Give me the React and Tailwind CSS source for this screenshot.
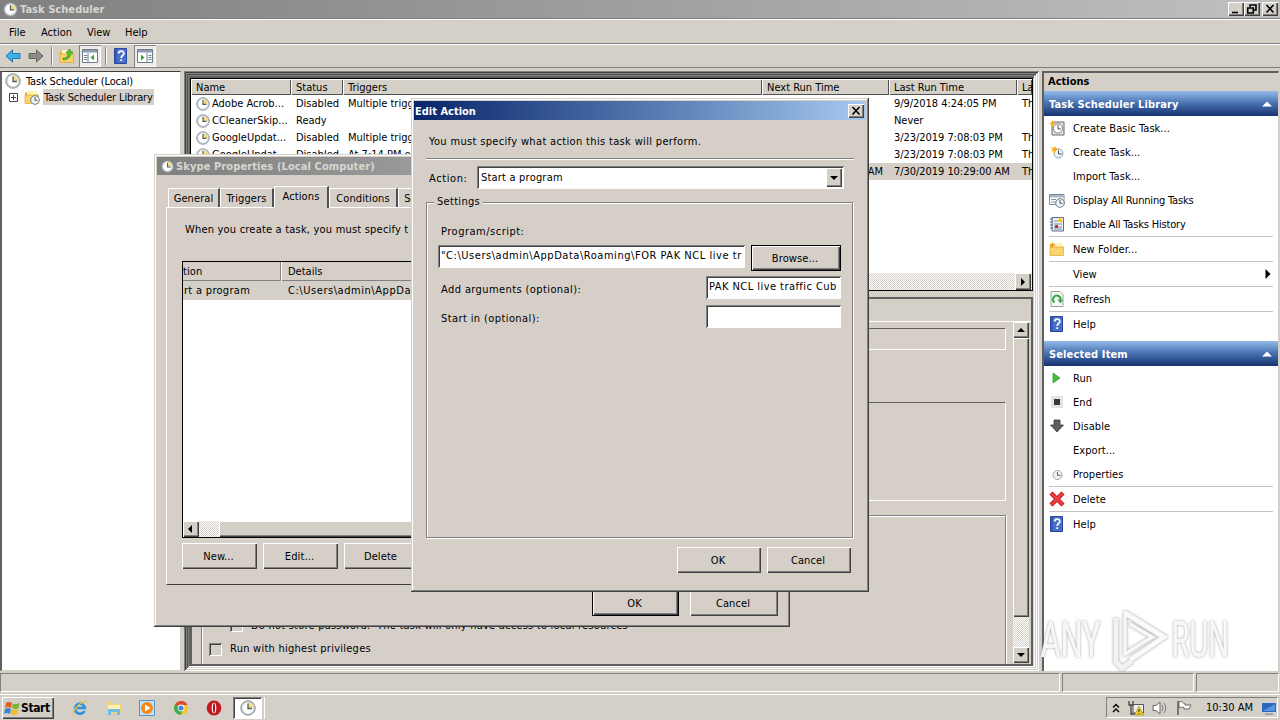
import clsx from "clsx";

const raised = "bg-[#d4d0c8] shadow-[inset_1px_1px_#fff,inset_-1px_-1px_#404040,inset_-2px_-2px_#808080]";
const sunken = "shadow-[inset_1px_1px_#808080,inset_-1px_-1px_#fff,inset_2px_2px_#404040]";
const dither = "bg-[repeating-conic-gradient(#fff_0_25%,#d4d0c8_0_50%)] bg-[length:2px_2px]";
// nested client edges around the middle pane
const frame =
    "shadow-[inset_1px_1px_#808080,inset_-1px_-1px_#fff,inset_2px_2px_#404040,inset_-2px_-2px_#d4d0c8,inset_3px_3px_#808080,inset_-3px_-3px_#fff,inset_4px_4px_#505050,inset_-4px_-4px_#d4d0c8,inset_5px_5px_#808080,inset_-5px_-5px_#fff,inset_7px_7px_#606060,inset_-7px_-7px_#d4d0c8]";

const tasks = [
    { name: "Adobe Acrob...", status: "Disabled", trigger: "Multiple trigge", last: "9/9/2018 4:24:05 PM", result: "Th" },
    { name: "CCleanerSkip...", status: "Ready", trigger: "", last: "Never", result: "" },
    { name: "GoogleUpdat...", status: "Disabled", trigger: "Multiple trigge", last: "3/23/2019 7:08:03 PM", result: "Th" },
    { name: "GoogleUpdat...", status: "Disabled", trigger: "At 7:14 PM e", last: "3/23/2019 7:08:03 PM", result: "Th" },
    { next: "AM", last: "7/30/2019 10:29:00 AM", result: "Th", selected: true },
];

const libraryActions = [
    { label: "Create Basic Task...", icon: "basic" },
    { label: "Create Task...", icon: "create" },
    { label: "Import Task..." },
    { label: "Display All Running Tasks", icon: "running", tight: true },
    { label: "Enable All Tasks History", icon: "history", line: true, tight: true },
    { label: "New Folder...", icon: "folder", line: true },
    { label: "View", arrow: true, line: true },
    { label: "Refresh", icon: "refresh", line: true },
    { label: "Help", icon: "help" },
];

const itemActions = [
    { label: "Run", icon: "run" },
    { label: "End", icon: "end" },
    { label: "Disable", icon: "disable" },
    { label: "Export..." },
    { label: "Properties", icon: "clock" },
    { label: "Delete", icon: "delete", line: true, above: true },
    { label: "Help", icon: "help" },
];

function Clock({ size = 16 }) {
    return (
        <svg width={size} height={size} viewBox="0 0 16 16" className="shrink-0">
            <circle cx="8" cy="8" r="7.2" fill="#c9d0d6" stroke="#8b9298" />
            <circle cx="8" cy="8" r="5.4" fill="#fff" />
            <path d="M8 8V2.6A5.4 5.4 0 0 1 13.4 8Z" fill="#f3dd82" />
            <path d="M8 3.5V8.5H12" fill="none" stroke="#4e5964" strokeWidth="1.3" />
        </svg>
    );
}

function Folder() {
    return (
        <>
            <path d="M1 3.5H6L7.5 5H14V14H1Z" fill="#e9ae2c" />
            <path d="M3 2H13V6H3Z" fill="#fff3bd" />
            <path d="M1 6H14.5V14.5H1Z" fill="#f9d468" stroke="#d89b20" strokeWidth=".6" />
        </>
    );
}

function SmallClock() {
    return (
        <>
            <circle cx="11" cy="11" r="4.3" fill="#eef4f7" stroke="#6d7d88" />
            <path d="M11 8V11.3H13.5" fill="none" stroke="#4d5a64" />
        </>
    );
}

const drawings = {
    basic: (
        <>
            <path d="M3 2H15V15H3Z" fill="#e5e3df" stroke="#6d6a66" />
            <circle cx="9" cy="8.5" r="4.6" fill="#fff" stroke="#7c858b" />
            <path d="M9 5V9H12" fill="none" stroke="#4d5a64" />
            <path d="M3.5 0L4.5 2.5L7 3.5L4.5 4.5L3.5 7L2.5 4.5L0 3.5L2.5 2.5Z" fill="#f7a922" />
        </>
    ),
    create: (
        <>
            <circle cx="9.5" cy="9.5" r="4.5" fill="#e8f2f8" stroke="#8da6b5" />
            <path d="M9.5 6.5V10H12.5" fill="none" stroke="#43525d" />
            <path d="M2 3L5 4L6 2L7.5 4.5L10 5.5L7 6.5L5.5 10L4.5 7L2 7.5L3.5 5.5Z" fill="#f9ac1c" />
        </>
    ),
    running: (
        <>
            <path d="M.5 2.5H15V12.5H.5Z" fill="#fff" stroke="#7d8b98" />
            <path d="M1 3H14.5V5.5H1Z" fill="#a9b7c4" />
            <path d="M2 7.5H7M2 10H7" stroke="#7d95ab" />
            <SmallClock />
        </>
    ),
    history: (
        <>
            <path d="M3 1.5H14.5V15H3Z" fill="#eaf0f7" stroke="#5c6f86" />
            <path d="M5 5H13M5 8H13M5 11H13M5 13H13" stroke="#7793b4" />
            <path d="M1 3H4M1 6H4M1 9H4M1 12H4" stroke="#5a6069" />
            <path d="M11 1L14 6H8Z" fill="#f5c625" />
            <path d="M6 9H9V12H6Z" fill="#c23131" />
        </>
    ),
    folder: (
        <>
            <Folder />
            <path d="M3.5 1L4.5 3L7 4L4.5 5L3.5 7L2.5 5L0 4L2.5 3Z" fill="#f5971a" />
        </>
    ),
    refresh: (
        <>
            <path d="M2 .5H11L14 3.5V15.5H2Z" fill="#f4f8f4" stroke="#93a796" />
            <path d="M5.5 11.5A3.8 3.8 0 1 1 11.5 9" fill="none" stroke="#35a847" strokeWidth="2" />
            <path d="M8.5 8.5H14L11.5 12.5Z" fill="#35a847" />
        </>
    ),
    help: (
        <>
            <path d="M1.5 .5H13.5V15.5H1.5Z" fill="#4a6fc9" stroke="#2a479f" />
            <path d="M3 1V15" stroke="#2a479f" />
            <path d="M5.6 5.6C5.6 2.3 10.8 2.3 10.8 5.4C10.8 7.3 8.2 7.5 8.2 10" fill="none" stroke="#fff" strokeWidth="1.7" />
            <path d="M7.3 11.3H9.1V13H7.3Z" fill="#fff" />
        </>
    ),
    run: <path d="M4 3L11 8L4 13Z" fill="#43bd32" stroke="#2d9225" strokeWidth=".7" />,
    end: (
        <>
            <path d="M2 2H14V14H2Z" fill="#e3e3e3" />
            <path d="M5 5H11V11H5Z" fill="#383838" />
        </>
    ),
    disable: <path d="M5 2H11V7H14.5L8 14L1.5 7H5Z" fill="#5e5e5e" stroke="#3e3e3e" strokeWidth=".8" />,
    clock: (
        <>
            <circle cx="8.5" cy="9" r="4.5" fill="#f1f1ef" stroke="#a1a7a9" />
            <path d="M8.5 6V9.3H11.5" fill="none" stroke="#665f4b" />
        </>
    ),
    delete: (
        <>
            <path d="M2 2L14 14M14 2L2 14" stroke="#b3161c" strokeWidth="4.4" />
            <path d="M2 2L14 14M14 2L2 14" stroke="#ed3d40" strokeWidth="2.6" />
        </>
    ),
    library: (
        <>
            <Folder />
            <SmallClock />
        </>
    ),
    up: (
        <>
            <Folder />
            <path d="M4 10C8 10 9 8 9 5H7L10.5 1L14 5H12C12 9 9 12 4 12Z" fill="#5abb37" stroke="#338b20" strokeWidth=".6" />
        </>
    ),
    back: <path d="M1 8L7.5 2V5.5H15V10.5H7.5V14Z" fill="#3fb1ea" stroke="#2176ae" />,
    forward: <path d="M15 8L8.5 2V5.5H1V10.5H8.5V14Z" fill="#8b8b8b" stroke="#626262" />,
    paneLeft: (
        <>
            <path d="M.5 1.5H15.5V14.5H.5Z" fill="#fff" stroke="#6e7b8b" />
            <path d="M1 2H15V4.5H1Z" fill="#8b9bb0" />
            <path d="M6 5V14M2 7.5H5M2 9.5H5M2 11.5H5" stroke="#6e7b8b" />
            <path d="M12 6.5V12.5L8.5 9.5Z" fill="#37a52d" />
        </>
    ),
    paneRight: (
        <>
            <path d="M.5 1.5H15.5V14.5H.5Z" fill="#fff" stroke="#6e7b8b" />
            <path d="M1 2H15V4.5H1Z" fill="#8b9bb0" />
            <path d="M10 5V14M11.5 7.5H14.5M11.5 9.5H14.5M11.5 11.5H14.5" stroke="#6e7b8b" />
            <path d="M4 6.5V12.5L7.5 9.5Z" fill="#37a52d" />
        </>
    ),
    ie: (
        <>
            <path d="M12.5 11A5 5 0 1 1 13 8H5" fill="none" stroke="#2e94d9" strokeWidth="2.6" />
            <path d="M2 14.5C-2 12 11 -1 15 2" fill="none" stroke="#efbd35" strokeWidth="1.3" />
        </>
    ),
    explorer: (
        <>
            <path d="M1 2H6L7 4H15V13H1Z" fill="#f3d573" />
            <path d="M2 5H14V10H2Z" fill="#fdf2b4" />
            <path d="M2 9H14V15H11V12H5V15H2Z" fill="#72bde2" />
        </>
    ),
    media: (
        <>
            <path d="M.5 .5H15.5V15.5H.5Z" fill="#c7e1f5" stroke="#5396cd" />
            <circle cx="8" cy="8" r="6" fill="#f18a1d" />
            <path d="M6 4.5L11.5 8L6 11.5Z" fill="#fff" />
        </>
    ),
    chrome: (
        <>
            <circle cx="8" cy="8" r="7" fill="#f4c829" />
            <path d="M8 8L2 4.5A7 7 0 0 1 14.5 5H8Z" fill="#df4634" />
            <path d="M8 8L2 4.5A7 7 0 0 0 7.5 15L10.5 9Z" fill="#3fa954" />
            <circle cx="8" cy="8" r="3.4" fill="#fff" />
            <circle cx="8" cy="8" r="2.6" fill="#4b86e2" />
        </>
    ),
    opera: (
        <>
            <ellipse cx="8" cy="8" rx="7.3" ry="7.5" fill="#c4161c" />
            <ellipse cx="8" cy="8" rx="2.3" ry="5.3" fill="#fff" />
            <ellipse cx="8" cy="8" rx="1.1" ry="4.8" fill="#a31216" />
        </>
    ),
    flag: (
        <>
            <path d="M2 1V15" stroke="#555" strokeWidth="1.4" />
            <path d="M3 2C6 0 7 4 9 3.5L9 5H15L13 9H8V7.5C6 7 5 7 3 8Z" fill="#fff" stroke="#666" />
        </>
    ),
    sound: (
        <>
            <path d="M1 5.5H4L8 2V14L4 10.5H1Z" fill="#fff" stroke="#666" />
            <path d="M10 5Q12 8 10 11M12 3Q15.5 8 12 13" fill="none" stroke="#777" />
        </>
    ),
    network: (
        <>
            <path d="M5 4.5H15.5V13H5Z" fill="#eee" stroke="#555" />
            <path d="M1 1V5H5V1M3 5V14H7" fill="none" stroke="#444" strokeWidth="1.3" />
            <path d="M11 6L15.5 15H6.5Z" fill="#f5d128" stroke="#9e8413" strokeWidth=".6" />
            <path d="M11 9V12M11 13V14" stroke="#222" />
        </>
    ),
    desktop: (
        <>
            <path d="M.5 2.5H15.5V12.5H.5Z" fill="#2c67bd" stroke="#cfd8e2" />
            <path d="M2 11L14 4V11Z" fill="#5997df" />
            <path d="M4 14H12" stroke="#777" />
        </>
    ),
    windows: (
        <>
            <path d="M2 3Q5 1 8 3L7 8Q4 6 1 8Z" fill="#e95d25" />
            <path d="M9 3.5Q12 5 15.5 3L14.5 8Q11 10 8 8Z" fill="#76b52c" />
            <path d="M1 9Q4 7 7 9L6 14Q3 12 0 14Z" fill="#3c86cf" />
            <path d="M8 9Q11 11 14 9L13 14Q10 16 7 14Z" fill="#f3bc22" />
        </>
    ),
};

function Icon({ name, size = 16 }) {
    return (
        <svg width={size} height={size} viewBox="0 0 16 16" className="shrink-0">
            {drawings[name]}
        </svg>
    );
}

function Arrow({ dir, size = 8 }) {
    const d = { left: "M5 0V8L1 4Z", right: "M2 0V8L6 4Z", down: "M0 2H8L4 6Z", up: "M0 6H8L4 2Z" }[dir];
    return (
        <svg width={size} height={size} viewBox="0 0 8 8">
            <path d={d} fill="currentColor" />
        </svg>
    );
}

function ScrollButton({ dir, className = "h-4 w-4" }) {
    return (
        <div className={clsx("flex shrink-0 items-center justify-center", raised, className)}>
            <Arrow dir={dir} />
        </div>
    );
}

function Button({ children, primary, className }) {
    return (
        <button
            className={clsx(
                "flex shrink-0 items-center justify-center pt-px pr-[2px] tracking-[0.1px]",
                primary
                    ? "bg-[#d5cfc8] shadow-[inset_0_0_0_1px_#000,inset_2px_2px_#fff,inset_-2px_-2px_#404040,inset_-3px_-3px_#808080]"
                    : "bg-[#d5cfc8] shadow-[inset_1px_1px_#fff,inset_-1px_-1px_#404040,inset_-2px_-2px_#808080]",
                className
            )}
        >
            {children}
        </button>
    );
}

function CaptionButton({ d }) {
    return (
        <div className={clsx("h-[14px] w-4", raised)}>
            <svg width="16" height="14" viewBox="0 0 16 14">
                <path d={d} fill="none" stroke="#000" strokeWidth="1.6" />
            </svg>
        </div>
    );
}

function TitleBar() {
    return (
        <div className="flex h-[18px] shrink-0 items-center bg-linear-to-r from-[#808080] to-[#c0c0c0] pr-0.5 pl-[3px]">
            <Clock size={15} />
            <span className="ml-[2px] flex-1 font-bold tracking-[0.05px] text-[#d9d6d0]">Task Scheduler</span>
            <CaptionButton d="M4 10.5H10" />
            <CaptionButton d="M6 5V3H12V8H10M3.7 6H9.3V11H3.7Z" />
            <div className="ml-[2px]">
                <CaptionButton d="M4.5 3L11.5 10.5M11.5 3L4.5 10.5" />
            </div>
        </div>
    );
}

function MenuBar() {
    return (
        <div className="flex h-[25px] shrink-0 items-center border-y border-t-white border-b-[#808080] pt-[2px] pl-[9px]">
            <span className="w-8">File</span>
            <span className="w-[46px]">Action</span>
            <span className="w-[38px]">View</span>
            <span>Help</span>
        </div>
    );
}

function Toolbar() {
    const divider = "h-[18px] w-0.5 border-r border-l border-l-[#808080] border-r-white";
    const pressed = "flex h-[22px] w-[22px] items-center justify-center bg-[#eeece8] shadow-[inset_1px_1px_#808080,inset_-1px_-1px_#fff]";
    return (
        <div className="flex h-6 shrink-0 items-center border-t border-b border-t-white border-b-[#808080] pl-[5px]">
            <Icon name="back" />
            <div className="ml-[7px]"><Icon name="forward" /></div>
            <div className={clsx("ml-[7px]", divider)} />
            <div className="mr-1 ml-[6px]"><Icon name="up" /></div>
            <div className={pressed}><Icon name="paneLeft" /></div>
            <div className={clsx("ml-[4px]", divider)} />
            <div className="mr-[5px] ml-[6px]"><Icon name="help" /></div>
            <div className={pressed}><Icon name="paneRight" /></div>
        </div>
    );
}

function Tree() {
    return (
        <div className="w-[181px] shrink-0 border-t border-r border-b border-l-2 border-t-[#404040] border-r-[#d4d0c8] border-b-[#d4d0c8] border-l-[#606060] bg-white pl-[3px]">
            <div className="flex h-[17px] items-center">
                <Clock />
                <span className="ml-[5px] pt-px tracking-[-0.15px]">Task Scheduler (Local)</span>
            </div>
            <div className="flex h-4 items-center pl-1">
                <svg width="9" height="9" className="mr-[6px]">
                    <path d="M.5 .5H8.5V8.5H.5ZM2 4.5H7M4.5 2V7" fill="none" stroke="#444" />
                </svg>
                <Icon name="library" />
                <span className="ml-[3px] h-4 bg-[#d4d0c8] px-px leading-[17px] tracking-[-0.13px]">Task Scheduler Library</span>
            </div>
        </div>
    );
}

const columns = "grid grid-cols-[100px_52px_419px_127px_128px_15px]";

function TaskTable() {
    return (
        <div className="h-[213px] shrink-0 overflow-hidden border border-black bg-white">
            <div className={clsx(columns, "h-4")}>
                {["Name", "Status", "Triggers", "Next Run Time", "Last Run Time", "La"].map((c) => (
                    <div
                        key={c}
                        className="h-4 overflow-hidden bg-[#d4d0c8] pl-[5px] leading-[17px] shadow-[inset_1px_1px_#fff,inset_-1px_-1px_#505050]"
                    >
                        {c}
                    </div>
                ))}
            </div>
            {tasks.map((t, i) => (
                <div key={i} className={clsx(columns, "h-[17px] whitespace-nowrap leading-[18px]", t.selected && "bg-[#d4d0c8]")}>
                    <div className="flex items-center gap-0.5 pl-[5px]">
                        {t.name && <Clock size={14} />}
                        {t.name}
                    </div>
                    <div className="pl-[5px]">{t.status}</div>
                    <div className="pl-[5px]">{t.trigger}</div>
                    <div className="pr-[6px] text-right">{t.next}</div>
                    <div className="pl-[5px] tracking-[-0.05px]">{t.last}</div>
                    <div className="overflow-hidden pl-[5px]">{t.result}</div>
                </div>
            ))}
            <div className={clsx("mt-[93px] flex h-[17px] justify-end", dither)}>
                <ScrollButton dir="right" className="mr-px h-[17px] w-4" />
            </div>
        </div>
    );
}

function Checkbox() {
    return <span className={clsx("h-[13px] w-[13px] shrink-0", sunken)} />;
}

function DetailsPane() {
    return (
        <div className="mt-[6px] flex flex-1 flex-col border-2 border-[#606060] bg-[#d5cfc8]">
            <div className="h-[23px] shrink-0 border-b border-white bg-[#d4d0c8]" />
            <div className="flex min-h-0 flex-1">
                <div className="flex flex-1 flex-col overflow-hidden pr-[7px] pl-[9px]">
                    <div className="mt-[6px] h-[22px] shrink-0 border border-t-[#606060] border-r-white border-b-white border-l-[#606060]" />
                    <div className="mt-[52px] h-[99px] shrink-0 border border-t-[#606060] border-r-white border-b-white border-l-[#808080]" />
                    <div className="mt-[14px] flex-1 border border-b-0 border-[#808080] pt-[103px] pl-[7px] shadow-[inset_1px_1px_#fff,1px_0_#fff]">
                        <div className="flex items-center gap-2 pl-[21px] leading-[13px]">
                            <Checkbox />
                            <span className="whitespace-nowrap tracking-[0.22px]">
                                Do not store password.&nbsp; The task will only have access to local resources
                            </span>
                        </div>
                        <div className="mt-[10px] flex items-center gap-2 leading-[14px]">
                            <Checkbox />
                            <span className="tracking-[0.25px]">Run with highest privileges</span>
                        </div>
                    </div>
                </div>
                <div className={clsx("mb-px flex w-4 flex-col", dither)}>
                    <ScrollButton dir="up" />
                    <div className={clsx("h-[279px] shrink-0", raised)} />
                    <div className="mt-auto"><ScrollButton dir="down" /></div>
                </div>
                <div className="w-[2px]" />
            </div>
        </div>
    );
}

function SectionHeader({ children }) {
    return (
        <div className="flex h-[25px] shrink-0 items-center justify-between bg-linear-to-b from-[#93bbe9] via-[#4770b1] to-[#17346f] pr-[6px] pl-[5px] font-bold text-white">
            <span className="pt-px tracking-[0.12px]">{children}</span>
            <Arrow dir="up" size={10} />
        </div>
    );
}

function ActionList({ items }) {
    return items.map((a, i) => (
        <div
            key={i}
            className={clsx(
                "mr-[5px] ml-[5px] flex items-center",
                a.above ? "h-[26px] border-t border-[#c4c4c4]" : a.line ? "h-[25px]" : "h-6",
                a.line && "border-b border-b-[#c4c4c4]"
            )}
        >
            <div className="w-6">{a.icon && <Icon name={a.icon} />}</div>
            <span className={clsx("flex-1", a.tight ? "tracking-[-0.18px]" : "tracking-[0.05px]")}>{a.label}</span>
            {a.arrow && <Arrow dir="right" size={10} />}
        </div>
    ));
}

function ActionsPane() {
    return (
        <div className="ml-[3px] flex w-[237px] shrink-0 flex-col border-t-2 border-r border-l-2 border-t-[#606060] border-r-[#d4d0c8] border-l-[#606060] bg-white">
            <div className="h-[18px] shrink-0 bg-[#d4d0c8] pl-1 font-bold leading-[18px]">Actions</div>
            <SectionHeader>Task Scheduler Library</SectionHeader>
            <ActionList items={libraryActions} />
            <div className="h-[5px]" />
            <SectionHeader>Selected Item</SectionHeader>
            <ActionList items={itemActions} />
        </div>
    );
}

function StatusBar() {
    const cell = "border border-t-[#808080] border-r-white border-b-white border-l-[#808080]";
    return (
        <div className="flex h-[19px] shrink-0 gap-0.5">
            <div className={clsx("w-[1060px]", cell)} />
            <div className={clsx("w-[132px]", cell)} />
            <div className={clsx("w-[83px]", cell)} />
        </div>
    );
}

function Taskbar() {
    return (
        <div className="mt-[2px] flex h-[27px] shrink-0 items-center border-t border-white pb-px pl-0.5">
            <div className={clsx("flex h-[22px] w-[52px] items-center pl-0.5", raised)}>
                <Icon name="windows" />
                <span className="ml-px text-[12px] font-bold tracking-[-0.4px]">Start</span>
            </div>
            <div className="ml-[18px] flex gap-[17.5px]">
                {["ie", "explorer", "media", "chrome", "opera"].map((n) => (
                    <Icon key={n} name={n} />
                ))}
            </div>
            <div className={clsx("ml-[11px] flex h-[22px] w-[29px] items-center justify-center bg-white", sunken)}>
                <Clock />
            </div>
            <div className="ml-0.5 h-[22px] w-px bg-white" />
            <div className="mr-0.5 ml-auto flex h-[21px] w-[172px] items-center border border-t-[#808080] border-r-white border-b-white border-l-[#808080] pl-[5px]">
                <svg width="8" height="10" viewBox="0 0 8 10">
                    <path d="M1 4.5L4 1.5L7 4.5M1 9L4 6L7 9" fill="none" stroke="#000" strokeWidth="1.4" />
                </svg>
                <div className="ml-[8px] flex gap-2">
                    <Icon name="network" />
                    <Icon name="sound" />
                    <Icon name="flag" />
                </div>
                <span className="ml-[14px] whitespace-nowrap">10:30 AM</span>
                <div className="ml-auto"><Icon name="desktop" /></div>
            </div>
        </div>
    );
}

function Watermark() {
    return (
        <div className="absolute top-[608px] left-[1040px] flex h-[64px] w-[194px] items-center justify-between font-['Roboto'] text-[50px] leading-none font-normal tracking-[-1px] text-white/90 [text-shadow:0_0_3px_#999]">
            <span className="w-[64px] origin-left scale-x-[.73]">ANY</span>
            <svg width="60" height="64" viewBox="0 0 60 64" className="shrink-0 drop-shadow-[0_0_1.5px_#999]">
                <path d="M17 5L56 29L22 52" fill="none" stroke="#fafafa" strokeWidth="5" />
                <path d="M8 10V54L14 60L24 53" fill="none" stroke="#f2f2f2" strokeWidth="5" />
                <path d="M17 3V46L44 29L22 16" fill="none" stroke="#f8f8f8" strokeWidth="3.5" />
            </svg>
            <span className="w-[63px] origin-left scale-x-[.7]">RUN</span>
        </div>
    );
}

function Tab({ children, active, className }) {
    return (
        <div
            className={clsx(
                "flex shrink-0 items-center justify-center border-t border-r-2 border-l border-t-white border-r-[#505050] border-l-white bg-[#d5cfc8] tracking-[0.1px]",
                active ? "relative -mb-px h-[22px] pb-[2px]" : "h-[19px]",
                className
            )}
        >
            {children}
        </div>
    );
}

function PropertiesDialog() {
    return (
        <div className="absolute top-[154px] left-[154px] flex h-[473px] w-[636px] flex-col bg-[#d5cfc8] px-[3px] pt-[3px] shadow-[inset_-1px_-1px_#404040,inset_1px_1px_#d4d0c8,inset_-2px_-2px_#808080,inset_2px_2px_#fff]">
            <div className="flex h-[18px] shrink-0 items-center bg-linear-to-r from-[#808080] to-[#c0c0c0] pl-[4px]">
                <Clock size={13} />
                <span className="ml-[2px] font-bold tracking-[0.1px] text-[#d9d6d0]">Skype Properties (Local Computer)</span>
            </div>
            <div className="mt-[11px] ml-[11px] flex h-[21px] shrink-0 items-end">
                <Tab className="w-[52px]">General</Tab>
                <Tab className="w-[54px]">Triggers</Tab>
                <Tab active className="w-[55px]">Actions</Tab>
                <Tab className="w-[69px]">Conditions</Tab>
                <Tab className="w-[26px]">Se</Tab>
            </div>
            <div className="mr-[9px] ml-[9px] h-[378px] shrink-0 border border-t-white border-r-[#404040] border-b-[#404040] border-l-white px-[15px] pt-[14px]">
                <p className="pl-[3px] leading-4 tracking-[0.2px]">When you create a task, you must specify t</p>
                <div className="mt-[23px] h-[277px] overflow-hidden border border-black bg-white">
                    <div className="flex h-[19px] bg-[#d5cfc8] leading-[19px] shadow-[inset_0_-1px_#808080]">
                        <span className="w-[98px] border-r border-[#808080] tracking-[0.1px]">tion</span>
                        <span className="border-l border-white pl-[6px]">Details</span>
                    </div>
                    <div className="flex h-[19px] bg-[#d4d0c8] leading-[19px]">
                        <span className="w-[98px] pl-px tracking-[0.3px]">rt a program</span>
                        <span className="pl-[7px] tracking-[0.55px]">C:\Users\admin\AppDa</span>
                    </div>
                    <div className={clsx("mt-[221px] flex h-4", dither)}>
                        <ScrollButton dir="left" />
                        <div className={clsx("ml-5 flex-1", raised)} />
                    </div>
                </div>
                <div className="mt-[5px] flex gap-[6px]">
                    <Button className="h-[26px] w-[75px]">New...</Button>
                    <Button className="h-[26px] w-[75px]">Edit...</Button>
                    <Button className="h-[26px] w-[75px]">Delete</Button>
                </div>
            </div>
            <div className="mt-[5px] mr-[9px] flex justify-end gap-[11px]">
                <Button primary className="h-[26px] w-[87px]">OK</Button>
                <Button className="h-[26px] w-[88px]">Cancel</Button>
            </div>
        </div>
    );
}

function Field({ label, children, className }) {
    return (
        <div className={clsx("flex items-center justify-between", className)}>
            <label className="pt-[3px] tracking-[0.4px]">{label}</label>
            {children}
        </div>
    );
}

function EditActionDialog() {
    return (
        <div className="absolute top-[98px] left-[411px] flex h-[494px] w-[458px] flex-col bg-[#d5cfc8] px-[3px] pt-[3px] shadow-[inset_-1px_-1px_#404040,inset_1px_1px_#d4d0c8,inset_-2px_-2px_#808080,inset_2px_2px_#fff]">
            <div className="flex h-[19px] shrink-0 items-center justify-between bg-linear-to-r from-[#0a246a] to-[#a6caf0] pr-[2px] pl-px">
                <span className="pt-px font-bold text-white">Edit Action</span>
                <CaptionButton d="M4.5 3L11.5 10.5M11.5 3L4.5 10.5" />
            </div>
            <div className="flex flex-1 flex-col px-3">
                <p className="mt-[14px] pl-[3px] leading-4 tracking-[0.34px]">You must specify what action this task will perform.</p>
                <div className="mt-[8px] border-t border-b border-t-[#808080] border-b-white" />
                <div className="mt-[6px] flex items-center pl-[3px]">
                    <label className="w-[48px] pt-px tracking-[0.6px]">Action:</label>
                    <div className={clsx("flex h-[23px] w-[367px] items-center justify-between bg-white p-0.5 pl-1", sunken)}>
                        <span className="tracking-[0.2px]">Start a program</span>
                        <ScrollButton dir="down" className="h-[19px] w-4" />
                    </div>
                </div>
                <fieldset className="mt-[5px] mr-px h-[344px] min-w-0 border border-[#808080] pr-[11px] pl-[11px] shadow-[1px_1px_#fff,inset_1px_1px_#fff]">
                    <legend className="-ml-[4px] bg-[#d5cfc8] px-[3px] leading-4 tracking-[0.3px]">Settings</legend>
                    <p className="mt-[14px] pl-[3px] leading-4 tracking-[0.5px]">Program/script:</p>
                    <div className="mt-[5px] flex">
                        <div className={clsx("h-[23px] w-[307px] shrink-0 overflow-hidden bg-white pl-[3px] leading-[22px] whitespace-nowrap tracking-[0.54px]", sunken)}>
                            "C:\Users\admin\AppData\Roaming\FOR PAK NCL live tr
                        </div>
                        <Button primary className="ml-[6px] h-[26px] w-[90px]">Browse...</Button>
                    </div>
                    <Field label="Add arguments (optional):" className="mt-[5px] h-[23px] pl-[3px]">
                        <div className={clsx("h-[23px] w-[135px] overflow-hidden bg-white pl-[3px] leading-[22px] whitespace-nowrap tracking-[0.45px]", sunken)}>
                            PAK NCL live traffic Cub
                        </div>
                    </Field>
                    <Field label="Start in (optional):" className="mt-[6px] h-[23px] pl-[3px]">
                        <div className={clsx("h-[23px] w-[135px] bg-white", sunken)} />
                    </Field>
                </fieldset>
                <div className="mt-[9px] mr-[3px] flex justify-end gap-[6px]">
                    <Button className="h-[26px] w-[84px]">OK</Button>
                    <Button className="h-[26px] w-[84px]">Cancel</Button>
                </div>
            </div>
        </div>
    );
}

export default function App() {
    return (
        <div className="relative flex h-[720px] w-[1280px] flex-col overflow-hidden bg-[#d4d0c8] font-['DejaVu_Sans_Condensed','DejaVu_Sans',sans-serif] text-[11px] leading-none [font-stretch:condensed] text-black">
            <TitleBar />
            <div className="h-px shrink-0 bg-[#808080]" />
            <MenuBar />
            <Toolbar />
            <div className="mt-[3px] flex h-[600px] shrink-0">
                <Tree />
                <div className={clsx("ml-[3px] flex w-[855px] shrink-0 flex-col pt-[7px] pr-[6px] pb-[5px] pl-[6px]", frame)}>
                    <TaskTable />
                    <DetailsPane />
                </div>
                <ActionsPane />
            </div>
            <div className="h-[2px] shrink-0" />
            <StatusBar />
            <Taskbar />
            <PropertiesDialog />
            <EditActionDialog />
            <Watermark />
        </div>
    );
}
